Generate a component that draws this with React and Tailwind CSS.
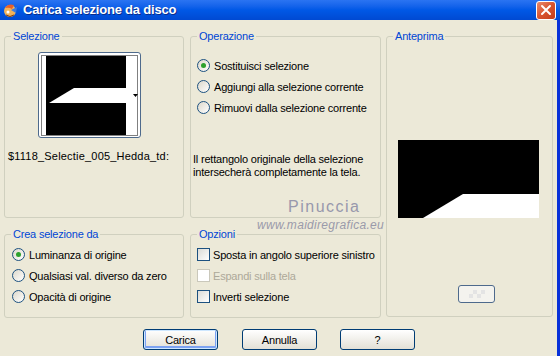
import React from "react";

function Legend({ children }) {
  return (
    <legend className="ml-[6px] px-[2px] text-[#0046D5] leading-[14px]">{children}</legend>
  );
}

function Radio({ checked, children }) {
  return (
    <div className="flex items-center h-[21px]">
      <span className="w-[13px] h-[13px] rounded-full border border-[#1C5180] bg-gradient-to-br from-[#DCD8CB] to-white flex items-center justify-center shrink-0">
        {checked && <span className="w-[5px] h-[5px] rounded-full bg-[#2DA12D]" />}
      </span>
      <span className="ml-[4px] leading-[14px]">{children}</span>
    </div>
  );
}

function Check({ disabled, children }) {
  return (
    <div className="flex items-center h-[21px]">
      <span
        className={
          disabled
            ? "w-[13px] h-[13px] border border-[#CAC8BB] bg-white shrink-0"
            : "w-[13px] h-[13px] border border-[#1C5180] bg-gradient-to-br from-[#DCDCD7] to-white shrink-0"
        }
      />
      <span className={disabled ? "ml-[3px] leading-[14px] text-[#ACA899]" : "ml-[3px] leading-[14px]"}>{children}</span>
    </div>
  );
}

function XPButton({ children, isDefault }) {
  return (
    <div
      className={
        "w-[75px] h-[21px] rounded-[3px] border border-[#003C74] bg-gradient-to-b from-white to-[#E3E0D6] flex items-center justify-center leading-[14px] " +
        (isDefault ? "shadow-[inset_0_0_0_1px_#CEE7FF,inset_0_-1px_0_2px_#7DA2F2]" : "")
      }
    >
      {children}
    </div>
  );
}

export default function App() {
  return (
    <div className="w-[560px] h-[356px] overflow-hidden bg-[#ECE9D8] text-[11px] tracking-[-0.2px] text-black font-[family-name:'Liberation_Sans',Arial,sans-serif]">
      {/* Title bar */}
      <div className="h-[20px] flex items-center bg-gradient-to-b from-[#2A74F2] via-[#0058E6] to-[#0049D2]">
        <svg width="16" height="16" viewBox="0 0 16 16" className="ml-[2px] shrink-0">
          <circle cx="8" cy="9" r="6" fill="#F2B35A" />
          <path d="M3 6 Q6 1 12 3 L10 7 Q7 5 3 6Z" fill="#E8602A" />
          <path d="M9 8 L15 5 L14 11 Z" fill="#3C7BE0" />
          <circle cx="6" cy="10" r="1.5" fill="#fff" />
          <path d="M4 13 Q8 16 12 13" stroke="#7A3B12" strokeWidth="1" fill="none" />
        </svg>
        <span className="ml-[5px] text-white font-bold text-[13px] tracking-[-0.2px] leading-[16px] [text-shadow:1px_1px_0_#0A2D8C]">
          Carica selezione da disco
        </span>
        <div className="flex-1" />
        <div className="mr-[4px] w-[20px] h-[19px] rounded-[3px] border border-white bg-gradient-to-br from-[#E88A6B] via-[#D8532F] to-[#C43D18] flex items-center justify-center">
          <svg width="12" height="12" viewBox="0 0 12 12">
            <path d="M2 2 L10 10 M10 2 L2 10" stroke="white" strokeWidth="2" strokeLinecap="round" />
          </svg>
        </div>
      </div>

      <div className="flex h-[336px]">
        <div className="relative w-[557px] pt-[9px] pl-[4px]">
          <div className="flex">
            {/* Left column */}
            <div className="w-[180px] flex flex-col gap-[9px]">
              <fieldset className="border border-[#D0D0BF] rounded-[3px] h-[189px] min-w-0">
                <Legend>Selezione</Legend>
                <div className="ml-[33px] mt-[9px] w-[103px] h-[86px] rounded-[3px] border border-[#4E6A8C] bg-white">
                  <svg width="101" height="84" viewBox="1 1 101 84">
                    <rect x="8" y="4" width="80" height="79" fill="black" />
                    <polygon points="11,51 36,36 88,36 88,51" fill="white" />
                    <rect x="3.5" y="3.5" width="96" height="80" fill="none" stroke="black" strokeWidth="1" strokeDasharray="1 1" />
                    <polygon points="95,42 100,42 97.5,45" fill="black" />
                  </svg>
                </div>
                <div className="mt-[11px] pl-[3px] whitespace-nowrap leading-[14px] tracking-[0.2px]">
                  $1118_Selectie_005_Hedda_td:
                </div>
              </fieldset>
              <fieldset className="border border-[#D0D0BF] rounded-[3px] h-[91px] min-w-0">
                <Legend>Crea selezione da</Legend>
                <div className="mt-[3px] pl-[7px]">
                  <Radio checked>Luminanza di origine</Radio>
                  <Radio>Qualsiasi val. diverso da zero</Radio>
                  <Radio>Opacità di origine</Radio>
                </div>
              </fieldset>
            </div>

            {/* Middle column */}
            <div className="ml-[6px] w-[191px] flex flex-col gap-[9px]">
              <fieldset className="border border-[#D0D0BF] rounded-[3px] h-[189px] min-w-0">
                <Legend>Operazione</Legend>
                <div className="mt-[12px] pl-[6px]">
                  <Radio checked>Sostituisci selezione</Radio>
                  <Radio>Aggiungi alla selezione corrente</Radio>
                  <Radio>Rimuovi dalla selezione corrente</Radio>
                </div>
                <p className="mt-[35px] pl-[2px] leading-[13px]">
                  Il rettangolo originale della selezione
                  <br />
                  intersecherà completamente la tela.
                </p>
              </fieldset>
              <fieldset className="border border-[#D0D0BF] rounded-[3px] h-[91px] min-w-0">
                <Legend>Opzioni</Legend>
                <div className="mt-[3px] pl-[6px]">
                  <Check>Sposta in angolo superiore sinistro</Check>
                  <Check disabled>Espandi sulla tela</Check>
                  <Check>Inverti selezione</Check>
                </div>
              </fieldset>
            </div>

            {/* Right column */}
            <div className="ml-[5px] w-[167px]">
              <fieldset className="border border-[#D0D0BF] rounded-[3px] h-[288px] min-w-0">
                <Legend>Anteprima</Legend>
                <div className="ml-[11px] mt-[97px] w-[141px] h-[78px]">
                  <svg width="141" height="78" viewBox="0 0 141 78">
                    <rect width="141" height="78" fill="black" />
                    <polygon points="25,78 65,54 141,54 141,78" fill="white" />
                  </svg>
                </div>
                <div className="ml-[71px] mt-[67px] w-[37px] h-[18px] rounded-[3px] border border-[#4E6A8C] bg-[#F4F3EE] flex items-center justify-center">
                  <div className="w-[16px] h-[8px] bg-[linear-gradient(45deg,#E4E4E4_25%,transparent_25%,transparent_75%,#E4E4E4_75%),linear-gradient(45deg,#E4E4E4_25%,transparent_25%,transparent_75%,#E4E4E4_75%)] bg-[length:8px_8px] bg-[position:0_0,4px_4px]" />
                </div>
              </fieldset>
            </div>
          </div>

          {/* Buttons */}
          <div className="mt-[11px] pl-[139px] flex gap-[24px]">
            <XPButton isDefault>Carica</XPButton>
            <XPButton>Annulla</XPButton>
            <div className="-ml-[1px]">
              <XPButton>?</XPButton>
            </div>
          </div>

          {/* Watermark */}
          <div className="absolute left-[288px] top-[177px] text-[16px] tracking-[1.5px] text-[#8F90A8] opacity-90 leading-[20px]">
            Pinuccia
          </div>
          <div className="absolute left-[257px] top-[198px] text-[12px] italic tracking-[0.3px] text-[#9A9AAA] leading-[14px]">
            www.maidiregrafica.eu
          </div>
        </div>
        <div className="w-[3px] bg-[#0831D9]" />
      </div>
    </div>
  );
}
